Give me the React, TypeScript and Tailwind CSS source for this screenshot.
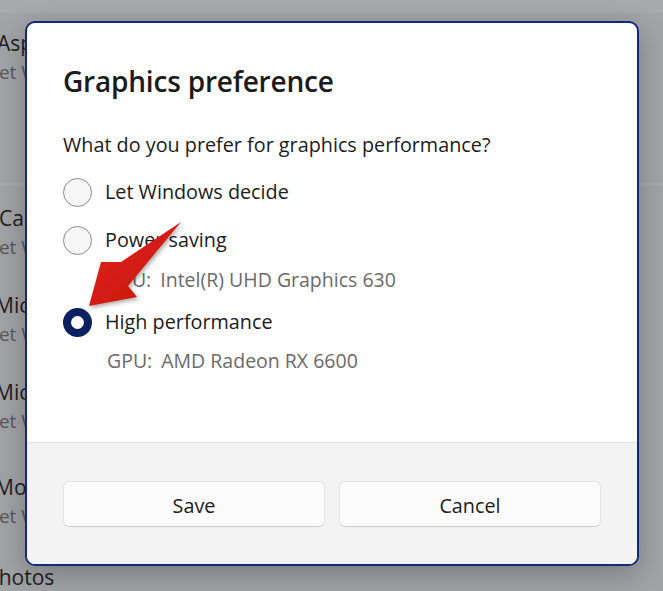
import React from "react";

const font = "font-['Open_Sans','Noto_Sans',sans-serif]";

function Radio({ checked }: { checked?: boolean }) {
  if (checked) {
    return (
      <div className="w-[29px] h-[29px] rounded-full bg-[#0b2160] flex items-center justify-center shrink-0">
        <div className="w-[13px] h-[13px] rounded-full bg-white" />
      </div>
    );
  }
  return <div className="w-[29px] h-[29px] rounded-full border-[1.5px] border-[#8a8a8a] bg-[#f6f6f6] shrink-0" />;
}

function BgRow({ title, mt, tx, sx }: { title: string; mt: string; tx: string; sx: string }) {
  return (
    <div className={mt}>
      <div className={`h-[29px] leading-[29px] text-[21px] text-[#1e1e1e] whitespace-nowrap ${tx}`}>{title}</div>
      <div className={`h-[29px] leading-[29px] text-[19px] text-[#58585a] whitespace-nowrap ${sx}`}>Let Windows decide</div>
    </div>
  );
}

export default function App() {
  return (
    <div className={`relative w-[663px] h-[591px] overflow-hidden bg-[#a2a3a7] ${font}`}>
      {/* dimmed background page */}
      <div className="flex flex-col">
        <div className="h-[13px] bg-[#a8a9ad]" />
        <div className="h-[170px] bg-[#a3a4a8]">
          <BgRow title="Aspect" mt="mt-[16px]" tx="ml-[-3px]" sx="ml-[-11px]" />
        </div>
        <div className="h-[3px] bg-[#a9aaae]" />
        <div>
          <BgRow title="Camera" mt="mt-[18px]" tx="ml-[-1px]" sx="ml-[-11px]" />
          <BgRow title="Microsoft" mt="mt-[29px]" tx="ml-[-5px]" sx="ml-[-11px]" />
          <BgRow title="Microsoft" mt="mt-[29px]" tx="ml-[-5px]" sx="ml-[-11px]" />
          <BgRow title="Movies & TV" mt="mt-[37px]" tx="ml-[-5px]" sx="ml-[-11px]" />
        </div>
        <div className="mt-[32px] ml-[-14px] h-[29px] leading-[29px] text-[21px] text-[#1e1e1e]">Photos</div>
      </div>

      {/* dialog overlay */}
      <div className="absolute left-[25px] top-[21px] w-[614px] h-[545px] rounded-[10px] border-2 border-[#13297c] bg-white overflow-hidden flex flex-col shadow-[0_8px_30px_rgba(0,0,0,0.25)]">
        <div className="flex-1 pl-[36px] pr-[36px] flex flex-col">
          <div className="mt-[40px] h-[36px] leading-[36px] text-[28px] font-semibold text-[#1b1b1b] tracking-[-0.2px]">Graphics preference</div>
          <div className="mt-[32px] h-[28px] leading-[28px] text-[19.8px] text-[#1b1b1b]">What do you prefer for graphics performance?</div>
          <div className="mt-[13px] h-[40px] flex items-center gap-[13px]">
            <Radio />
            <span className="text-[19.8px] text-[#1b1b1b]">Let Windows decide</span>
          </div>
          <div className="mt-[8px] h-[40px] flex items-center gap-[13px]">
            <Radio />
            <span className="text-[19.8px] text-[#1b1b1b]">Power saving</span>
          </div>
          <div className="mt-[6px] ml-[43px] h-[28px] leading-[28px] text-[19.5px] text-[#6a6a6a] whitespace-nowrap">
            GPU:<span className="ml-[9px]">Intel(R) UHD Graphics 630</span>
          </div>
          <div className="mt-[8px] h-[40px] flex items-center gap-[13px]">
            <Radio checked />
            <span className="text-[19.8px] text-[#1b1b1b]">High performance</span>
          </div>
          <div className="mt-[5px] ml-[44px] h-[28px] leading-[28px] text-[19.5px] text-[#6a6a6a] whitespace-nowrap">
            GPU:<span className="ml-[9px]">AMD Radeon RX 6600</span>
          </div>
        </div>
        <div className="h-[122px] shrink-0 border-t border-[#e6e6e6] bg-[#f3f3f3] px-[36px] pt-[38px] flex gap-[14px]">
          <button className="flex-1 h-[46px] rounded-[6px] bg-[#fbfbfb] border border-[#e3e3e3] border-b-[#cfcfcf] text-[19.8px] leading-[44px] pt-[2px] text-[#1b1b1b]">Save</button>
          <button className="flex-1 h-[46px] rounded-[6px] bg-[#fbfbfb] border border-[#e3e3e3] border-b-[#cfcfcf] text-[19.8px] leading-[44px] pt-[2px] text-[#1b1b1b]">Cancel</button>
        </div>
      </div>

      {/* red annotation arrow */}
      <svg className="absolute left-0 top-0" width="663" height="591" viewBox="0 0 663 591">
        <defs>
          <linearGradient id="ag" x1="0" y1="0" x2="1" y2="1">
            <stop offset="0" stopColor="#e3261a" />
            <stop offset="1" stopColor="#c4140b" />
          </linearGradient>
          <filter id="ds" x="-20%" y="-20%" width="140%" height="140%">
            <feDropShadow dx="1.5" dy="2" stdDeviation="2" floodColor="#000" floodOpacity="0.35" />
          </filter>
        </defs>
        <polygon
          points="181,222 121,262 101,262 89,306 137,297 128,286"
          fill="url(#ag)"
          filter="url(#ds)"
        />
      </svg>
    </div>
  );
}
